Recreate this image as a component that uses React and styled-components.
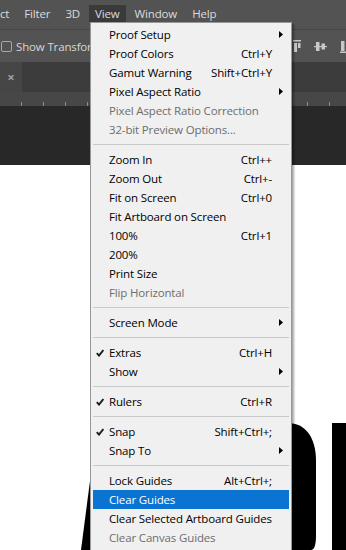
import React from "react";
import styled, { createGlobalStyle } from "styled-components";

const GlobalStyle = createGlobalStyle`
  html, body {
    margin: 0;
    padding: 0;
    background: #282828;
  }
  body {
    font-family: "Open Sans", "Noto Sans", sans-serif;
    font-size: 11.5px;
    letter-spacing: -0.15px;
  }
`;

const topMenus = ["ct", "Filter", "3D", "View", "Window", "Help"];

const viewMenu = [
  { label: "Proof Setup", sub: true },
  { label: "Proof Colors", keys: "Ctrl+Y" },
  { label: "Gamut Warning", keys: "Shift+Ctrl+Y" },
  { label: "Pixel Aspect Ratio", sub: true },
  { label: "Pixel Aspect Ratio Correction", disabled: true },
  { label: "32-bit Preview Options...", disabled: true },
  "sep",
  { label: "Zoom In", keys: "Ctrl++" },
  { label: "Zoom Out", keys: "Ctrl+-" },
  { label: "Fit on Screen", keys: "Ctrl+0" },
  { label: "Fit Artboard on Screen" },
  { label: "100%", keys: "Ctrl+1" },
  { label: "200%" },
  { label: "Print Size" },
  { label: "Flip Horizontal", disabled: true },
  "sep",
  { label: "Screen Mode", sub: true },
  "sep",
  { label: "Extras", keys: "Ctrl+H", checked: true },
  { label: "Show", sub: true },
  "sep",
  { label: "Rulers", keys: "Ctrl+R", checked: true },
  "sep",
  { label: "Snap", keys: "Shift+Ctrl+;", checked: true },
  { label: "Snap To", sub: true },
  "sep",
  { label: "Lock Guides", keys: "Alt+Ctrl+;" },
  { label: "Clear Guides", active: true },
  { label: "Clear Selected Artboard Guides" },
  { label: "Clear Canvas Guides", disabled: true },
];

const App = () => {
  return (
    <Screen>
      <GlobalStyle />
      <MenuBar>
        {topMenus.map((m) => (
          <TopItem key={m} $open={m === "View"}>
            {m}
          </TopItem>
        ))}
      </MenuBar>

      <OptionsBar>
        <CheckBox />
        <OptionLabel>Show Transform</OptionLabel>
        <AlignGroup>
          <AlignIcon width="8" height="13" viewBox="0 0 8 13">
            <rect x="0" y="0" width="8" height="1.5" />
            <rect x="1" y="3" width="3" height="9" />
            <rect x="5" y="3" width="2.5" height="5" />
          </AlignIcon>
          <AlignIcon width="13" height="13" viewBox="0 0 13 13">
            <rect x="0" y="6" width="13" height="1.2" />
            <rect x="2" y="2" width="3.5" height="9" />
            <rect x="7.5" y="3.5" width="3.5" height="6" />
          </AlignIcon>
          <AlignIcon width="12" height="13" viewBox="0 0 12 13">
            <rect x="1" y="1" width="3.5" height="10" />
            <rect x="0" y="11.5" width="12" height="1.5" />
          </AlignIcon>
        </AlignGroup>
      </OptionsBar>

      <TabBar>
        <DocTab>×</DocTab>
      </TabBar>

      <Ruler />
      <Pasteboard />

      <Canvas>
        <svg width="346" height="385" viewBox="0 0 346 385">
          <polygon points="96,270 124,270 92,385 81,385" fill="#000" />
          <path
            d="M262 258 H288 C305 258 316 272 316 296 V370 Q316 385 311 385 H262 Z"
            fill="#000"
          />
          <rect x="332" y="258" width="20" height="127" fill="#000" />
        </svg>
      </Canvas>

      <Dropdown>
        {viewMenu.map((item, i) =>
          item === "sep" ? (
            <Separator key={i} />
          ) : (
            <Row key={i} $disabled={item.disabled} $active={item.active}>
              <Check>
                {item.checked && (
                  <svg width="8" height="8" viewBox="0 0 8 8">
                    <polyline
                      points="0.8,4.2 3,6.6 7.4,1"
                      fill="none"
                      stroke="#1a1a1a"
                      strokeWidth="1.9"
                    />
                  </svg>
                )}
              </Check>
              <Label>{item.label}</Label>
              <Keys>{item.keys}</Keys>
              <Arrow>
                {item.sub && (
                  <svg width="4" height="7" viewBox="0 0 4 7">
                    <polygon points="0,0 4,3.5 0,7" fill="#000" />
                  </svg>
                )}
              </Arrow>
            </Row>
          )
        )}
      </Dropdown>
    </Screen>
  );
};

export default App;

const Screen = styled.div`
  position: relative;
  width: 346px;
  height: 550px;
  overflow: hidden;
  display: flex;
  flex-direction: column;
`;

const MenuBar = styled.nav`
  height: 29px;
  flex-shrink: 0;
  box-sizing: border-box;
  background: #535353;
  display: flex;
  align-items: flex-start;
  gap: 3px;
  padding-top: 5px;
  margin-left: -6px;
`;

const TopItem = styled.div`
  height: 17px;
  line-height: 17px;
  padding: 0 6px;
  color: #dcdcdc;
  background: ${(p) => (p.$open ? "#3a3a3a" : "transparent")};
  white-space: nowrap;
`;

const OptionsBar = styled.div`
  height: 33px;
  flex-shrink: 0;
  box-sizing: border-box;
  background: #535353;
  border-top: 1px solid #474747;
  display: flex;
  align-items: center;
  padding-left: 1px;
  overflow: hidden;
`;

const CheckBox = styled.span`
  width: 9px;
  height: 9px;
  border: 1px solid #a8a8a8;
  border-radius: 2px;
  flex-shrink: 0;
`;

const OptionLabel = styled.span`
  color: #d6d6d6;
  margin-left: 4px;
  white-space: nowrap;
`;

const AlignGroup = styled.div`
  display: flex;
  align-items: center;
  gap: 13px;
  margin-left: auto;
  margin-right: -6px;
  padding-top: 1px;
`;

const AlignIcon = styled.svg`
  fill: #c8c8c8;
  flex-shrink: 0;
`;

const TabBar = styled.div`
  height: 30px;
  flex-shrink: 0;
  background: #3c3c3c;
  display: flex;
`;

const DocTab = styled.div`
  width: 22px;
  background: #464646;
  color: #a0a0a0;
  font-size: 13px;
  font-weight: 700;
  display: flex;
  align-items: center;
  justify-content: center;
`;

const Ruler = styled.div`
  height: 14px;
  flex-shrink: 0;
  background-color: #474747;
  background-image: repeating-linear-gradient(
    to right,
    transparent 0 21px,
    #8c8c8c 21px 22px
  );
  background-size: 100% 4px;
  background-position: 0 100%;
  background-repeat: no-repeat;
`;

const Pasteboard = styled.div`
  height: 59px;
  flex-shrink: 0;
  background: #282828;
`;

const Canvas = styled.div`
  flex: 1;
  background: #ffffff;
  overflow: hidden;
  svg {
    display: block;
  }
`;

const Dropdown = styled.div`
  position: absolute;
  left: 90px;
  top: 22px;
  width: 202px;
  box-sizing: border-box;
  background: #f0f0f0;
  border: 1px solid #979797;
  padding: 2px 0 3px;
  box-shadow: 2px 2px 2px rgba(0, 0, 0, 0.35);
`;

const Row = styled.div`
  height: 19px;
  margin: 0 2px;
  display: grid;
  grid-template-columns: 16px 1fr auto 17px;
  align-items: center;
  white-space: nowrap;
  color: ${(p) => (p.$active ? "#ffffff" : p.$disabled ? "#6d6d6d" : "#000000")};
  background: ${(p) => (p.$active ? "#0a74d3" : "transparent")};
`;

const Check = styled.span`
  display: flex;
  justify-content: flex-start;
  padding-left: 3px;
`;

const Label = styled.span`
  padding-left: 0;
`;

const Keys = styled.span`
  text-align: right;
  padding-left: 12px;
`;

const Arrow = styled.span`
  display: flex;
  justify-content: center;
  padding-left: 1px;
`;

const Separator = styled.div`
  height: 11px;
  margin: 0 2px;
  display: flex;
  align-items: center;
  &::after {
    content: "";
    flex: 1;
    height: 1px;
    background: #c9c9c9;
  }
`;
